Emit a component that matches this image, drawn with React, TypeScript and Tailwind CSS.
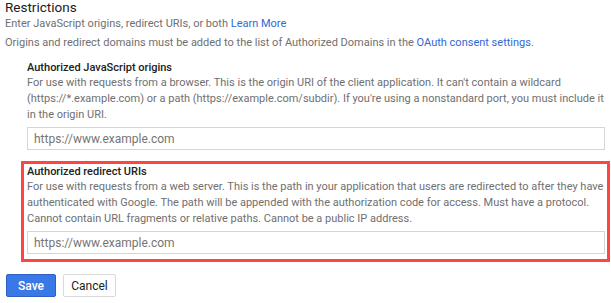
export default function App() {
  return (
    <div className="h-[303px] w-[611px] overflow-hidden bg-white pl-[5px] font-['Roboto',sans-serif] text-[11px] text-[#6f6f6f]">
      <h2 className="text-[13.5px] leading-[14px] text-[#212121]">Restrictions</h2>
      <p className="mt-[2px] leading-[16px]">
        Enter JavaScript origins, redirect URIs, or both{" "}
        <a className="text-[#3367d6]">Learn More</a>
      </p>
      <p className="mt-[3px] leading-[16px]">
        Origins and redirect domains must be added to the list of Authorized Domains in the{" "}
        <a className="text-[#3367d6]">OAuth consent settings</a>.
      </p>

      {/* JavaScript origins */}
      <div className="ml-[22px] mr-[6px] mt-[10px]">
        <Section
          title="Authorized JavaScript origins"
          text="For use with requests from a browser. This is the origin URI of the client application. It can't contain a wildcard (https://*.example.com) or a path (https://example.com/subdir). If you're using a nonstandard port, you must include it in the origin URI."
        />
      </div>

      {/* Redirect URIs, outlined in red */}
      <div className="ml-[16px] mr-[1px] mt-[11px] border-[3px] border-[#ff4444] pb-[5px] pl-[3px] pr-[2px] pt-[1px]">
        <Section
          title="Authorized redirect URIs"
          text="For use with requests from a web server. This is the path in your application that users are redirected to after they have authenticated with Google. The path will be appended with the authorization code for access. Must have a protocol. Cannot contain URL fragments or relative paths. Cannot be a public IP address."
        />
      </div>

      <div className="mt-[12px] flex gap-[7px] pl-[1px]">
        <button className="h-[23px] w-[50px] rounded-[2px] border border-[#2f5fc4] bg-[#3b78e7] text-[12px] font-medium text-white">
          Save
        </button>
        <button className="h-[23px] w-[53px] rounded-[2px] border border-[#dadada] bg-white text-[12px] text-[#212121]">
          Cancel
        </button>
      </div>
    </div>
  );
}

function Section({ title, text }: { title: string; text: string }) {
  return (
    <div>
      <div className="text-[11px] font-medium leading-[14px] text-[#212121]">{title}</div>
      <p className="leading-[16px]">{text}</p>
      <input
        placeholder="https://www.example.com"
        className="mt-[4px] block h-[23px] w-full border border-[#d6d6d6] px-[6px] text-[12px] text-[#212121] outline-none placeholder:text-[#757575]"
      />
    </div>
  );
}
